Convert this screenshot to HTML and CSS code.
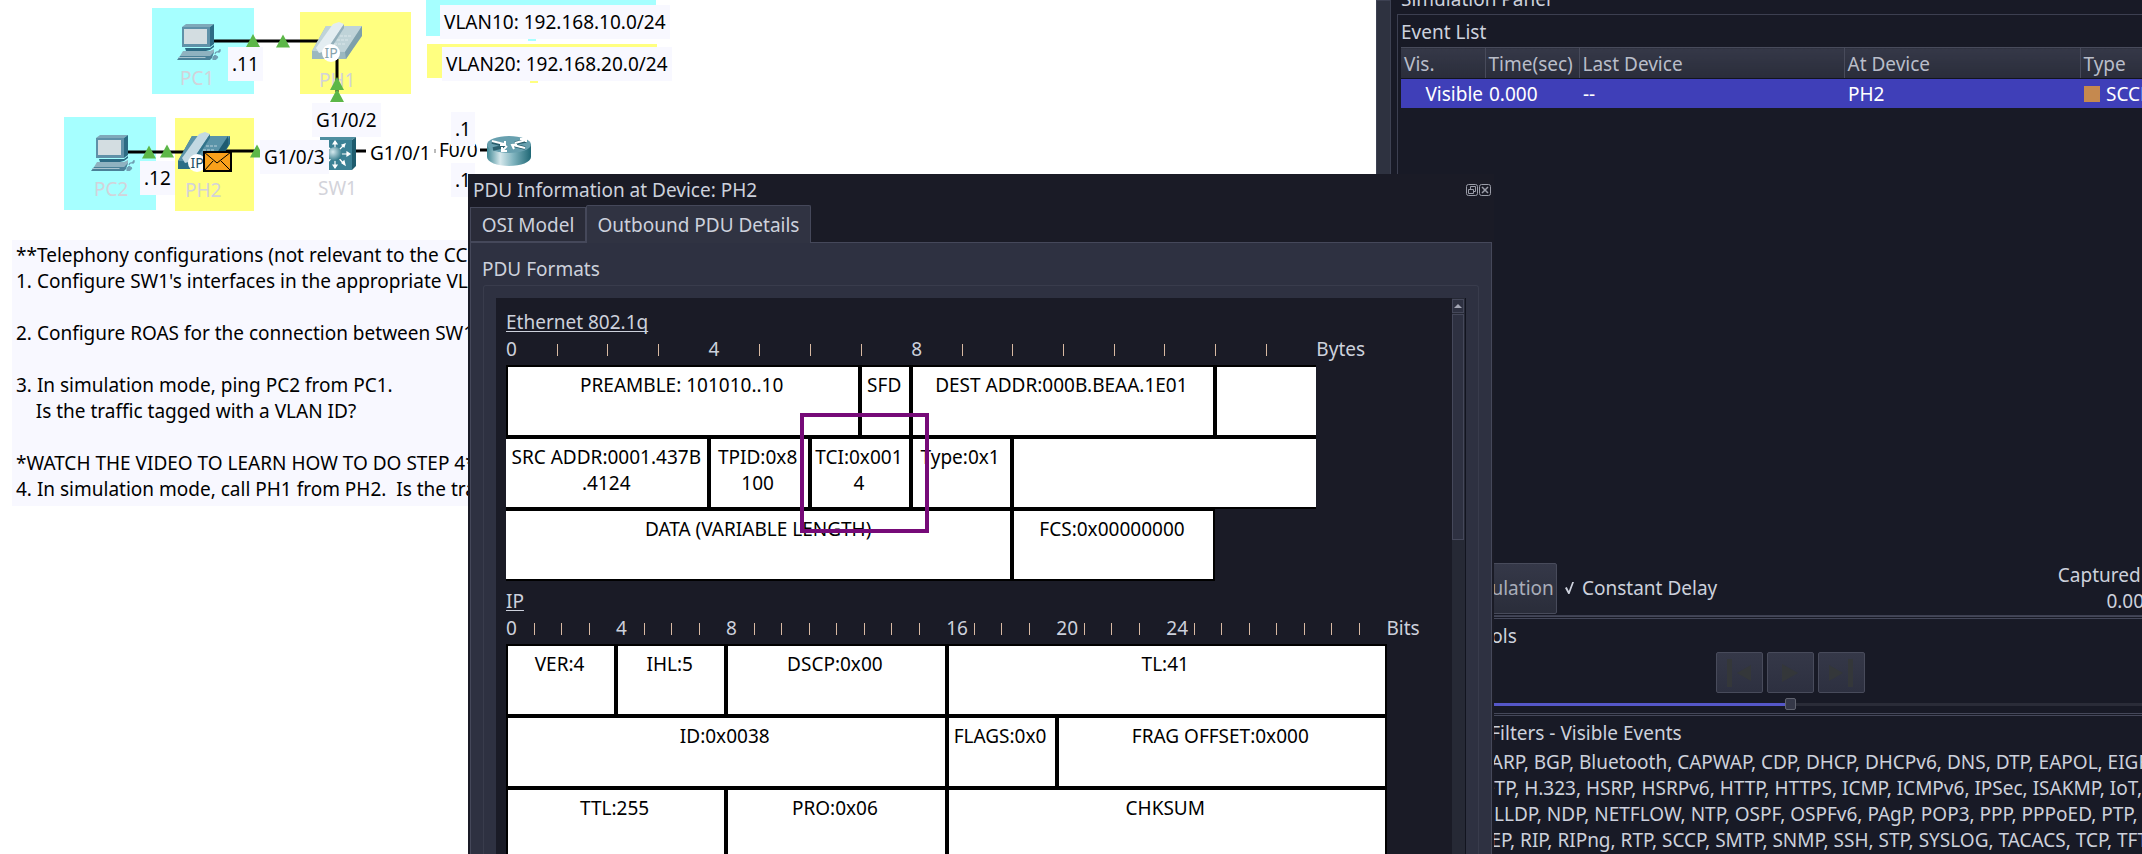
FILE: index.html
```html
<!DOCTYPE html>
<html lang="en">
<head>
<meta charset="utf-8">
<title>PDU Information at Device: PH2</title>
<link rel="stylesheet" href="styles.css">
</head>
<body>
<svg class="defs" aria-hidden="true">
  <defs>
    <linearGradient id="metal" x1="0" y1="0" x2="1" y2="0">
      <stop offset="0" stop-color="#3e8794"/><stop offset=".3" stop-color="#d6e8ec"/><stop offset=".6" stop-color="#7fb3be"/><stop offset="1" stop-color="#1f6775"/>
    </linearGradient>
    <radialGradient id="ball" cx=".35" cy=".35" r=".7">
      <stop offset="0" stop-color="#d5e9ee"/><stop offset="1" stop-color="#2b7485"/>
    </radialGradient>
    <symbol id="pc" viewBox="0 0 44 36">
      <path d="M5 3 9 0h28l-4 3z" fill="#7fa9ba"/>
      <path d="M33 3l4-3v20l-4 3z" fill="#2c6b84"/>
      <path d="M5 3h28v20H5z" fill="#5f91a8"/>
      <path d="M7 5h23v15H7z" fill="#d3dde1"/>
      <path d="M8 24h25l4-3v2l-4 3-4 1H9z" fill="#2c6b84"/>
      <path d="M6 27h27l4-2v4l-4 3H3z" fill="#8fb2c0"/>
      <path d="M3 32h30l4-4-2 6-2 2H0z" fill="#4b8198"/>
      <path d="M2 33h27l-1 1H1z" fill="#a9c4cf"/>
      <path d="M36 36q-1-3 2-5l3 2q-1 3-5 3zM38 30q0-3 3-2t2-3" fill="#6f9fb3" stroke="#6f9fb3" stroke-width="1"/>
    </symbol>
    <symbol id="router" viewBox="0 0 44 30">
      <path d="M0 8v13c0 5 10 9 22 9s22-4 22-9V8z" fill="url(#metal)"/>
      <ellipse cx="22" cy="8.500" rx="22" ry="8.500" fill="#68a0af"/>
      <g stroke="#2a5f6e" stroke-width="3.400" fill="none"><path d="M5 6l12 3M39 5l-11 2M6 13l13-3M38 12l-12-3"/></g>
      <g stroke="#fff" stroke-width="2" fill="none"><path d="M5 5l12 3M13 9h5V5M39 4l-11 3M33 3h6v3M15 15l5-5M15 11v4h5M38 12l-12-3M27 13l-2-4 5-1"/></g>
    </symbol>
    <symbol id="switch" viewBox="0 0 36 33">
      <path d="M0 0h36l-4 3H0z" fill="#4f8fa0"/><path d="M32 3l4-3v29l-4 4z" fill="#1e5c6e"/>
      <path d="M0 3h32v30H0z" fill="#3b8195"/>
      <g stroke="#fff" stroke-width="1.200" fill="#fff"><path d="M15 17V5M15 17v13M15 17h13M15 17 6 8M15 17l9-9M15 17l9 10M15 17l-8 9"/>
      <path d="M13 7l2-3 2 3zM13 28l2 3 2-3zM27 15l3 2-3 2zM22 8l3-1-1 3zM22 26l3 2-1-4zM8 27l-2 1 1-4z"/></g>
      <circle cx="15" cy="17" r="7" fill="url(#ball)"/>
    </symbol>
    <symbol id="up" viewBox="0 0 14 13"><path d="M7 0l7 13H0z" fill="#5cb748"/></symbol>
  </defs>
</svg>

<main class="workspace">
  <section class="canvas" aria-label="Topology">
    <div class="zone cyan z-pc1"></div>
    <div class="zone yellow z-ph1"></div>
    <div class="zone cyan z-pc2"></div>
    <div class="zone yellow z-ph2"></div>
    <div class="zone cyan z-vlan10"></div>
    <div class="zone yellow z-vlan20"></div>
    <div class="zone cyan z-stub10"></div>
    <div class="zone yellow z-stub20"></div>

    <span class="name n-pc1">PC1</span>
    <span class="name n-ph1">PH1</span>
    <span class="name n-pc2">PC2</span>
    <span class="name n-ph2">PH2</span>
    <span class="name n-sw1">SW1</span>

    <svg class="links" width="560" height="220" viewBox="0 0 560 220" aria-hidden="true">
      <g stroke="#000" stroke-width="3" fill="none">
        <path d="M212 41h108M337 58v34M126 152h70M225 151h34M350 151h16M480 150h9"/>
      </g>
      <use href="#pc" x="177" y="24" width="44" height="36"/>
      <use href="#pc" x="91" y="135" width="44" height="36"/>
      <use href="#switch" x="320" y="137" width="36" height="33"/>
      <use href="#router" x="487" y="136" width="44" height="30"/>
      <g>
        <path d="M312 51l14-25h36v8l-16 25h-34z" fill="#9bb8c0"/>
        <path d="M312 51l14-25h36l-17 26z" fill="#bfd3d8"/>
        <path d="M345 52l17-26v10l-16 23z" fill="#7d9fab"/>
        <path d="M316 48l17-24 6-2 5 2-18 27-7 2z" fill="#e3edf1"/>
        <path d="M326 51l18-27v4l-16 25z" fill="#93afba"/>
        <path d="M340 36h12M337 40h12M334 44h12" stroke="#dbe7ea" stroke-dasharray="3 1"/>
        <circle cx="331" cy="53" r="9" fill="#fff"/>
        <text x="331" y="58" class="ip pale">IP</text>
      </g>
      <g>
        <path d="M178 161l14-25h38v8l-16 25h-36z" fill="#2d6f86"/>
        <path d="M178 161l14-25h38l-17 26z" fill="#5a93a8"/>
        <path d="M211 162l17-26v10l-16 23z" fill="#1f5b71"/>
        <path d="M182 158l17-24 6-2 5 2-18 27-7 2z" fill="#c3d9e2"/>
        <path d="M192 161l18-27v4l-16 25z" fill="#33748b"/>
        <path d="M206 146h12M203 150h12" stroke="#b9d2db" stroke-dasharray="3 1"/>
        <circle cx="197" cy="163" r="9" fill="#fff"/>
        <text x="197" y="168" class="ip">IP</text>
        <path d="M204 152h27v19h-27z" fill="#f9a01b" stroke="#000" stroke-width="2"/>
        <path d="M204 152l13 11 14-11M204 171l9-10M231 171l-10-10" fill="none" stroke="#000"/>
      </g>
      <use href="#up" x="246" y="34" width="14" height="13"/>
      <use href="#up" x="276" y="34" width="14" height="14"/>
      <use href="#up" x="330" y="77" width="14" height="13"/>
      <use href="#up" x="330" y="89" width="14" height="13"/>
      <use href="#up" x="142" y="145" width="14" height="14"/>
      <use href="#up" x="160" y="144" width="14" height="14"/>
      <use href="#up" x="250" y="144" width="14" height="14"/>
      <path d="M435 149v4" stroke="#777"/>
    </svg>

    <span class="tag t-11">.11</span>
    <span class="tag t-12">.12</span>
    <span class="tag t-g2">G1/0/2</span>
    <span class="tag t-g3">G1/0/3</span>
    <span class="tag t-g1">G1/0/1</span>
    <span class="tag t-f0">F0/0</span>
    <span class="tag t-r1">.1</span>
    <span class="tag t-r2">.1</span>
    <span class="tag t-vlan10">VLAN10: 192.168.10.0/24</span>
    <span class="tag t-vlan20">VLAN20: 192.168.20.0/24</span>

<pre class="notes">**Telephony configurations (not relevant to the CCNA)
1. Configure SW1's interfaces in the appropriate VLANs

2. Configure ROAS for the connection between SW1

3. In simulation mode, ping PC2 from PC1.
    Is the traffic tagged with a VLAN ID?

*WATCH THE VIDEO TO LEARN HOW TO DO STEP 4*
4. In simulation mode, call PH1 from PH2.  Is the traffic</pre>
  </section>

  <div class="gutter"></div>

  <aside class="sim">
    <h2 class="sim-title">Simulation Panel</h2>
    <section class="events">
      <h3>Event List</h3>
      <table class="event-table">
        <colgroup><col class="c-vis"><col class="c-time"><col class="c-last"><col class="c-at"><col></colgroup>
        <thead><tr><th>Vis.</th><th>Time(sec)</th><th>Last Device</th><th>At Device</th><th>Type</th></tr></thead>
        <tbody><tr><td class="vis">Visible</td><td>0.000</td><td>--</td><td>PH2</td><td><span class="swatch"></span>SCCP</td></tr></tbody>
      </table>
      <div class="spacer"></div>
      <div class="reset-row">
        <button type="button" class="reset">Reset Simulation</button>
        <input type="checkbox" id="delay" class="tick-box" checked>
        <label for="delay">Constant Delay</label>
        <p class="captured">Captured to:<br>0.000 s</p>
      </div>
    </section>
    <section class="controls">
      <h3>Play Controls</h3>
      <div class="buttons">
        <button type="button" aria-label="Back"><svg width="32" height="32" viewBox="0 0 32 32"><path d="M4 2h5v28H4zM28 8v16L14 16z"/></svg></button>
        <button type="button" aria-label="Play"><svg width="32" height="32" viewBox="0 0 32 32"><path d="M8 7v18l16-9z"/></svg></button>
        <button type="button" aria-label="Forward"><svg width="32" height="32" viewBox="0 0 32 32"><path d="M23 2h5v28h-5zM4 8v16l14-8z"/></svg></button>
      </div>
      <input type="range" class="speed" aria-label="Speed" value="50">
    </section>
    <section class="filters">
      <h3>Event List Filters - Visible Events</h3>
      <p>ACL Filter, ARP, BGP, Bluetooth, CAPWAP, CDP, DHCP, DHCPv6, DNS, DTP, EAPOL, EIGRP,<br>EIGRPv6, FTP, H.323, HSRP, HSRPv6, HTTP, HTTPS, ICMP, ICMPv6, IPSec, ISAKMP, IoT, IoT<br>TCP, LACP, LLDP, NDP, NETFLOW, NTP, OSPF, OSPFv6, PAgP, POP3, PPP, PPPoED, PTP,<br>RADIUS, REP, RIP, RIPng, RTP, SCCP, SMTP, SNMP, SSH, STP, SYSLOG, TACACS, TCP, TFTP,</p>
    </section>
  </aside>
</main>

<section class="dialog" role="dialog" aria-labelledby="dlg-title">
  <header class="dialog-head">
    <h2 id="dlg-title">PDU Information at Device: PH2</h2>
    <button type="button" aria-label="Float"><svg width="12" height="12" viewBox="0 0 12 12"><rect x=".5" y=".5" width="11" height="11" rx="2"/><path d="M2.500 5.500h5v4h-5zM4.500 5V2.500h5v5H8"/></svg></button>
    <button type="button" aria-label="Close"><svg width="12" height="12" viewBox="0 0 12 12"><rect x=".5" y=".5" width="11" height="11" rx="2"/><path d="M3 3l6 6M9 3l-6 6" stroke-width="1.500"/></svg></button>
  </header>
  <nav class="tabs" role="tablist">
    <button type="button" role="tab">OSI Model</button>
    <button type="button" role="tab" class="active" aria-selected="true">Outbound PDU Details</button>
  </nav>
  <div class="pane">
    <h3>PDU Formats</h3>
    <div class="group">
      <div class="viewer">
        <div class="formats">
          <h4>Ethernet 802.1q</h4>
          <div class="ruler bytes">
            <b>0</b><i></i><i></i><i></i><b>4</b><i></i><i></i><i></i><b>8</b><i></i><i></i><i></i><i></i><i></i><i></i><i></i><b>Bytes</b>
          </div>
          <div class="grid bytes">
            <div class="f s7">PREAMBLE: 101010..10</div><div class="f s1">SFD</div><div class="f s6">DEST ADDR:000B.BEAA.1E01</div><div class="f s2 cont-r"></div>
            <div class="f s4 cont-l">SRC ADDR:0001.437B<br>.4124</div><div class="f s2">TPID:0x8<br>100</div><div class="f s2">TCI:0x001<br>4</div><div class="f s2">Type:0x1</div><div class="f s6 cont-r"></div>
            <div class="f s10 cont-l">DATA (VARIABLE LENGTH)</div><div class="f s4">FCS:0x00000000</div>
            <div class="marker"></div>
          </div>
          <h4>IP</h4>
          <div class="ruler bits">
            <b>0</b><i></i><i></i><i></i><b>4</b><i></i><i></i><i></i><b>8</b><i></i><i></i><i></i><i></i><i></i><i></i><i></i><b>16</b><i></i><i></i><i></i><b>20</b><i></i><i></i><i></i><b>24</b><i></i><i></i><i></i><i></i><i></i><i></i><i></i><b>Bits</b>
          </div>
          <div class="grid bits">
            <div class="f s4">VER:4</div><div class="f s4">IHL:5</div><div class="f s8">DSCP:0x00</div><div class="f s16">TL:41</div>
            <div class="f s16">ID:0x0038</div><div class="f s4">FLAGS:0x0</div><div class="f s12">FRAG OFFSET:0x000</div>
            <div class="f s8">TTL:255</div><div class="f s8">PRO:0x06</div><div class="f s16">CHKSUM</div>
          </div>
        </div>
        <div class="scroll" aria-hidden="true">
          <div class="arrow"><svg width="8" height="4" viewBox="0 0 8 4"><path d="M4 0l4 4H0z" fill="#a3a6b4"/></svg></div>
          <div class="thumb"></div>
        </div>
      </div>
    </div>
  </div>
</section>
</body>
</html>
```

FILE: styles.css
```css
* { box-sizing: border-box; }
html, body { height: 100%; }
body {
  margin: 0;
  position: relative;
  overflow: hidden;
  background: #181a26;
  color: #cdd1dc;
  font: 19px/26px "Noto Sans", "Open Sans", sans-serif;
}
h2, h3, h4, p, pre { margin: 0; font: inherit; }
button { font: inherit; color: inherit; padding: 0; border: 0; background: none; }
.defs { position: absolute; width: 0; height: 0; }

.workspace { display: flex; height: 100%; }
.canvas { flex: 1; position: relative; overflow: hidden; background: #fff; color: #000; }
.gutter { flex: 0 0 15px; background: #2e3240; border: 1px solid #3d4152; }

/* topology canvas */
.zone, .name, .tag, .links { position: absolute; }
.links { left: 0; top: 0; }
.cyan { background: #a6ffff; }
.yellow { background: #ffff80; }
.z-pc1 { left: 152px; top: 8px; width: 102px; height: 86px; }
.z-ph1 { left: 300px; top: 12px; width: 111px; height: 82px; }
.z-pc2 { left: 64px; top: 117px; width: 92px; height: 93px; }
.z-ph2 { left: 175px; top: 118px; width: 79px; height: 93px; }
.z-vlan10 { left: 426px; top: 0; width: 230px; height: 36px; }
.z-vlan20 { left: 427px; top: 44px; width: 230px; height: 34px; }
.z-stub10 { left: 528px; top: 38px; width: 8px; height: 3px; }
.z-stub20 { left: 530px; top: 80px; width: 8px; height: 3px; }
.name { color: #d3d3da; }
.n-pc1 { left: 180px; top: 65px; }
.n-ph1 { left: 319px; top: 67px; }
.n-pc2 { left: 94px; top: 176px; }
.n-ph2 { left: 185px; top: 177px; }
.n-sw1 { left: 318px; top: 175px; }
.ip { font: 14px "Noto Sans", sans-serif; fill: #1c4f66; text-anchor: middle; }
.pale { fill: #86a3ad; }
.tag { padding: 4px; background: #f8f8ff; white-space: nowrap; }
.t-11 { left: 228px; top: 47px; }
.t-12 { left: 140px; top: 161px; }
.t-g2 { left: 312px; top: 103px; }
.t-g3 { left: 260px; top: 140px; }
.t-g1 { left: 366px; top: 136px; background: none; }
.t-f0 { left: 435px; top: 133px; background: none; }
.t-r1 { left: 451px; top: 112px; }
.t-r2 { left: 451px; top: 163px; }
.t-vlan10 { left: 440px; top: 5px; }
.t-vlan20 { left: 442px; top: 47px; }
.notes {
  position: absolute;
  left: 12px;
  top: 240px;
  padding: 2px 4px 4px;
  background: #f8f8ff;
}

/* simulation panel */
.sim {
  flex: 0 0 751px;
  display: flex;
  flex-direction: column;
  overflow: hidden;
  padding-left: 6px;
  white-space: nowrap;
}
.sim > section { width: calc(100% + 44px); padding: 4px 6px 0 3px; }
.sim-title { flex: none; margin-top: -14px; height: 28px; padding-left: 4px; }
.events { flex: 1; display: flex; flex-direction: column; border: 1px solid #3c3f50; }
.events h3 { margin-bottom: 2px; }
.event-table { width: 100%; table-layout: fixed; border-collapse: collapse; text-align: left; }
.c-vis { width: 84px; }
.c-time { width: 94px; }
.c-last { width: 265px; }
.c-at { width: 236px; }
th, td { padding: 2px 2px 0 4px; font-weight: normal; }
th { height: 31px; padding-left: 3px; border-right: 1px solid #484b5b; border-bottom: 1px solid #12141f; background: linear-gradient(#353848, #2a2d3a); color: #b9bdc9; }
thead { border-top: 1px solid #484b5b; }
td { height: 29px; background: #3f3fb8; color: #fff; }
.vis { text-align: right; }
.swatch { display: inline-block; width: 16px; height: 16px; margin-right: 6px; background: #c5894f; vertical-align: -1px; }
.spacer { flex: 1; }
.reset-row { display: flex; align-items: center; height: 53px; padding-bottom: 1px; }
.reset { width: 156px; height: 51px; border: 1px solid #484b5b; border-radius: 2px; background: linear-gradient(#353848, #2a2d3a); color: #a9adb9; }
.tick-box { appearance: none; width: 9px; height: 12px; margin: 0 8px; }
.tick-box:checked { background: #cdd1dc; clip-path: polygon(0 50%, 20% 42%, 42% 74%, 80% 0, 100% 0, 50% 100%, 36% 100%); }
.captured { margin-left: auto; padding-right: 10px; text-align: right; }
.controls, .filters { border-top: 3px double #45485a; }
.controls { height: 97px; }
.buttons { display: flex; justify-content: center; gap: 4px; margin-top: 3px; }
.buttons button { width: 47px; height: 41px; border: 1px solid #484b5b; border-radius: 2px; background: linear-gradient(#353848, #2d3040); }
.buttons svg { display: block; margin: auto; fill: #34373a; }
.speed { appearance: none; display: block; width: 100%; height: 12px; margin: 5px 0 0; background: linear-gradient(90deg, #5557c8 50%, #2a2c38 50%) center / 100% 3px no-repeat; }
.speed::-webkit-slider-thumb { appearance: none; width: 11px; height: 12px; border: 1px solid #60636f; border-radius: 2px; background: #353848; }
.sim > .filters { height: 141px; padding-top: 4px; }
.filters p { margin-top: 3px; }

/* PDU window */
.dialog {
  position: absolute;
  left: 468px;
  top: 174px;
  bottom: 0;
  width: 1026px;
  display: flex;
  flex-direction: column;
  padding: 0 2px;
  overflow: hidden;
  background: #1a1b26;
}
.dialog-head { display: flex; gap: 1px; align-items: center; height: 31px; padding: 0 1px 0 3px; }
.dialog-head h2 { flex: 1; }
.dialog-head svg { display: block; fill: none; stroke: #9a9da8; }
.tabs { display: flex; align-items: flex-end; height: 37px; flex: none; }
.tabs button { height: 35px; width: 116px; border: 1px solid #45485a; background: #2a2c39; }
.tabs .active { height: 38px; width: 225px; margin-bottom: -1px; border-bottom: 0; background: #303342; z-index: 1; border-radius: 2px 2px 0 0; }
.pane { flex: 1; min-height: 0; display: flex; flex-direction: column; padding: 13px 12px 0; border: 1px solid #45485a; border-bottom: 0; background: #2e3141; }
.pane h3 { margin-left: -1px; }
.group { flex: 1; min-height: 0; display: flex; margin-top: 3px; padding: 12px 12px 0; border: 1px solid #393c4c; border-bottom: 0; border-radius: 3px 3px 0 0; }
.viewer { flex: 1; min-height: 0; display: flex; overflow: hidden; background: #1a1b26; }
.formats { flex: 1; padding: 11px 10px 0; }
.formats h4 { width: max-content; text-decoration: underline; text-decoration-thickness: 1px; text-underline-offset: 2px; text-decoration-skip-ink: none; }
.ruler, .grid { display: grid; position: relative; }
.ruler { height: 30px; padding-top: 1px; }
.ruler.bytes { grid-template-columns: repeat(17, 1fr); width: 861px; }
.ruler.bits { grid-template-columns: repeat(33, 1fr); width: 908px; }
.ruler b { font-weight: normal; width: 0; }
.ruler i { width: 1px; height: 12px; margin-top: 8px; background: #d8b9a2; }
.grid { grid-auto-rows: 72px; margin-bottom: 7px; }
.grid.bytes { grid-template-columns: repeat(16, 1fr); width: 810px; }
.grid.bits { grid-template-columns: repeat(32, 1fr); width: 881px; }
.f { padding: 5px 3px 0 0; border: 2px solid #000; background: #fff; color: #000; text-align: center; white-space: nowrap; }
.s1 { grid-column: span 1; }
.s2 { grid-column: span 2; }
.s4 { grid-column: span 4; }
.s6 { grid-column: span 6; }
.s7 { grid-column: span 7; }
.s8 { grid-column: span 8; }
.s10 { grid-column: span 10; }
.s12 { grid-column: span 12; }
.s16 { grid-column: span 16; }
.cont-l { border-left: 0; padding-right: 0; }
.cont-r { border-right: 0; }
.marker { position: absolute; left: 294px; top: 48px; width: 129px; height: 120px; border: 4px solid #760a78; }
.scroll { flex: 0 0 14px; display: flex; flex-direction: column; gap: 1px; padding: 1px 1px 0 0; background: #262935; border-right: 1px solid #12141f; }
.arrow { flex: none; height: 14px; display: grid; place-items: center; border: 1px solid #45485a; background: #2e3141; }
.thumb { flex: 0 0 226px; border: 1px solid #45485a; background: #2e3141; }
```
